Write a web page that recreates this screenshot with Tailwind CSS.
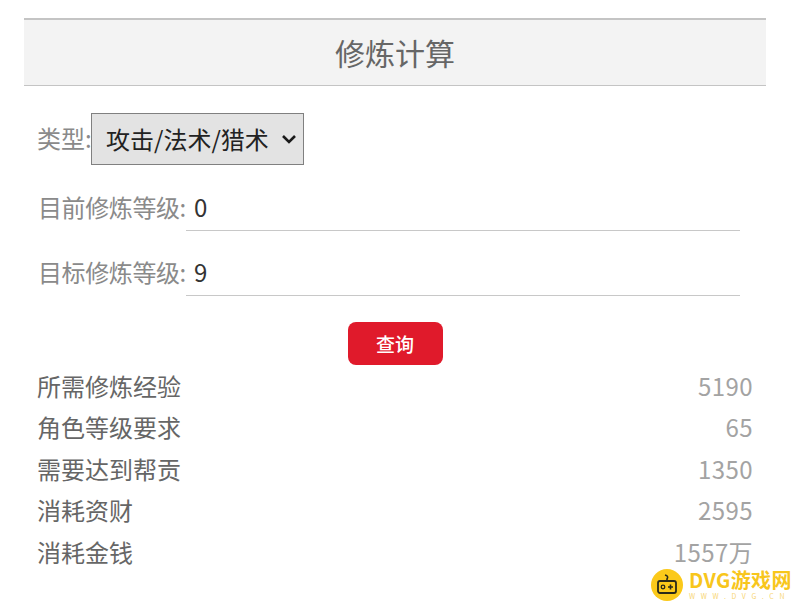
<!DOCTYPE html>
<html lang="zh">
<head>
<meta charset="utf-8">
<script src="https://cdn.jsdelivr.net/npm/@tailwindcss/browser@4"></script>
</head>
<body class="bg-white">
<div class="relative w-[800px] h-[610px] overflow-hidden bg-white font-['Noto_Sans_CJK_SC','Noto_Sans',sans-serif] text-[24px] text-[#8a8a8a]">
  <main class="pt-[18px] pl-[24px] w-[766px]">
    <h1 class="h-[68px] flex items-center justify-center bg-[#f3f3f3] border-t-2 border-b border-[#c4c4c4] text-[30px] font-normal text-[#666666]">修炼计算</h1>
    <div class="pl-[13px] pr-[26px]">
      <div class="mt-[27px] h-[52px] flex items-center">
        <span class="w-[54px] leading-none whitespace-nowrap -mt-[2px]">类型:</span>
        <div class="w-[213px] h-[52px] flex items-center bg-[#e3e3e3] border border-[#808080] pl-[14px] text-[#222222]">
          <span class="leading-none flex-1 -mt-[1px]">攻击/法术/猎术</span>
          <svg class="mr-[6px]" width="16" height="10" viewBox="0 0 16 10" fill="none"><path d="M2 2 L8 8 L14 2" stroke="#1a1a1a" stroke-width="2.6"/></svg>
        </div>
      </div>
      <div class="mt-[22px] flex items-start h-[44px]">
        <span class="w-[149px] pl-px leading-[40px] whitespace-nowrap tracking-[-0.4px]">目前修炼等级:</span>
        <span class="flex-1 h-full border-b border-[#c8c8c8] pl-[8px] text-[#333333] leading-[40px]">0</span>
      </div>
      <div class="mt-[21px] flex items-start h-[44px]">
        <span class="w-[149px] pl-px leading-[40px] whitespace-nowrap tracking-[-0.4px]">目标修炼等级:</span>
        <span class="flex-1 h-full border-b border-[#c8c8c8] pl-[8px] text-[#333333] leading-[40px]">9</span>
      </div>
    </div>
    <div class="mt-[26px] flex justify-center">
      <button class="w-[95px] h-[43px] rounded-[8px] bg-[#e01a2b] text-white text-[19px] font-medium leading-none">查询</button>
    </div>
    <dl class="pl-[13px] pr-[13px]">
      <div class="flex justify-between items-center h-[41.5px]"><dt class="text-[#666666]">所需修炼经验</dt><dd class="text-[#a3a3a3] tracking-[0.4px]">5190</dd></div>
      <div class="flex justify-between items-center h-[41.5px]"><dt class="text-[#666666]">角色等级要求</dt><dd class="text-[#a3a3a3] tracking-[0.4px]">65</dd></div>
      <div class="flex justify-between items-center h-[41.5px]"><dt class="text-[#666666]">需要达到帮贡</dt><dd class="text-[#a3a3a3] tracking-[0.4px]">1350</dd></div>
      <div class="flex justify-between items-center h-[41.5px]"><dt class="text-[#666666]">消耗资财</dt><dd class="text-[#a3a3a3] tracking-[0.4px]">2595</dd></div>
      <div class="flex justify-between items-center h-[41.5px]"><dt class="text-[#666666]">消耗金钱</dt><dd class="text-[#a3a3a3] tracking-[0.4px]">1557万</dd></div>
    </dl>
  </main>
  <div class="absolute left-[651px] top-[569px] flex items-start gap-[6px]">
    <svg width="32" height="32" viewBox="0 0 32 32">
      <circle cx="16" cy="16" r="16" fill="#fbc91a"/>
      <path d="M14 6 q4 1 2 4 v2" fill="none" stroke="#2a2a1a" stroke-width="1.6"/>
      <rect x="7" y="12" width="18" height="12" rx="2" fill="none" stroke="#2a2a1a" stroke-width="1.8"/>
      <circle cx="12" cy="18" r="1.8" fill="none" stroke="#2a2a1a" stroke-width="1.3"/>
      <path d="M17 18 h5 M19.5 15.5 v5" stroke="#2a2a1a" stroke-width="1.6"/>
    </svg>
    <div class="flex flex-col">
      <span class="text-[20px] leading-[21px] font-bold text-[#f8c61c] whitespace-nowrap tracking-[0.4px]">DVG游戏网</span>
      <span class="mt-[2px] text-[7px] leading-[9px] tracking-[5.6px] text-[#f8d673] whitespace-nowrap">WWW.DVG.CN</span>
    </div>
  </div>
</div>
</body>
</html>
